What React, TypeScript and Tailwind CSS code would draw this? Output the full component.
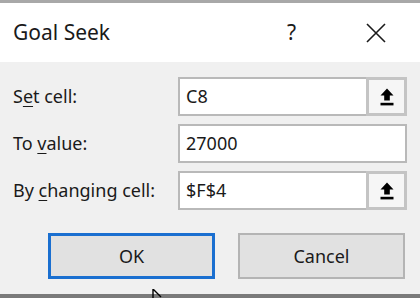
import React from "react";

const font = { fontFamily: '"Noto Sans", "Open Sans", sans-serif' };

function UpIcon() {
  return (
    <svg width="16" height="20" viewBox="0 0 16 20">
      <path d="M8 1.5 L14.5 8.5 L10.8 8.5 L10.8 13.5 L5.2 13.5 L5.2 8.5 L1.5 8.5 Z" fill="#000" />
      <rect x="1.5" y="15.8" width="13" height="2.6" fill="#000" />
    </svg>
  );
}

function Field({ value, button }: { value: string; button?: boolean }) {
  return (
    <div className="flex h-[39px] w-[229px] border-2 border-[#b9b9b9] bg-white">
      <div className="flex flex-1 items-center pl-[6px] text-[18px] text-[#1a1a1a]">{value}</div>
      {button && (
        <div className="flex w-[41px] items-center justify-center border-[3px] border-[#c4c4c4] bg-[#f6f6f6] -m-[2px] ml-0">
          <UpIcon />
        </div>
      )}
    </div>
  );
}

export default function App() {
  return (
    <div className="relative flex h-[298px] w-[420px] flex-col overflow-hidden bg-[#f0f0f0]" style={font}>
      <div className="h-[3px] bg-[#a8a8a8]" />
      <div className="flex h-[59px] items-center bg-white">
        <div className="pl-[13px] text-[21px] text-[#1a1a1a]">Goal Seek</div>
        <div className="ml-auto mr-[70px] text-[21px] text-[#1a1a1a]">?</div>
        <svg width="20" height="20" viewBox="0 0 20 20" className="mr-[34px]">
          <path d="M1 1 L19 19 M19 1 L1 19" stroke="#1a1a1a" strokeWidth="1.6" />
        </svg>
      </div>
      <div className="flex flex-1 flex-col bg-[#f0f0f0] pt-[15px]">
        <div className="flex flex-col gap-[8px]">
          <div className="flex items-center">
            <div className="w-[178px] pl-[13px] text-[18px] text-[#1a1a1a]">
              S<span className="underline underline-offset-[3px]">e</span>t cell:
            </div>
            <Field value="C8" button />
          </div>
          <div className="flex items-center">
            <div className="w-[178px] pl-[13px] text-[18px] text-[#1a1a1a]">
              To <span className="underline underline-offset-[3px]">v</span>alue:
            </div>
            <Field value="27000" />
          </div>
          <div className="flex items-center">
            <div className="w-[178px] pl-[13px] text-[18px] text-[#1a1a1a]">
              By <span className="underline underline-offset-[3px]">c</span>hanging cell:
            </div>
            <Field value="$F$4" button />
          </div>
        </div>
        <div className="mt-[23px] flex gap-[23px] pl-[48px]">
          <div className="flex h-[46px] w-[167px] items-center justify-center border-[3px] border-[#1a6fd0] bg-[#e1e1e1] text-[18px] text-[#1a1a1a]">
            OK
          </div>
          <div className="flex h-[46px] w-[167px] items-center justify-center border-2 border-[#b4b4b4] bg-[#e1e1e1] text-[18px] text-[#1a1a1a]">
            Cancel
          </div>
        </div>
      </div>
      <div className="h-[4px] bg-[#7a7a7a]" />
      <svg className="absolute left-[152px] top-[289px]" width="12" height="10" viewBox="0 0 12 10">
        <path d="M1 0 L1 10 M1 0 L9 8" stroke="#000" strokeWidth="1.4" fill="none" />
      </svg>
    </div>
  );
}
